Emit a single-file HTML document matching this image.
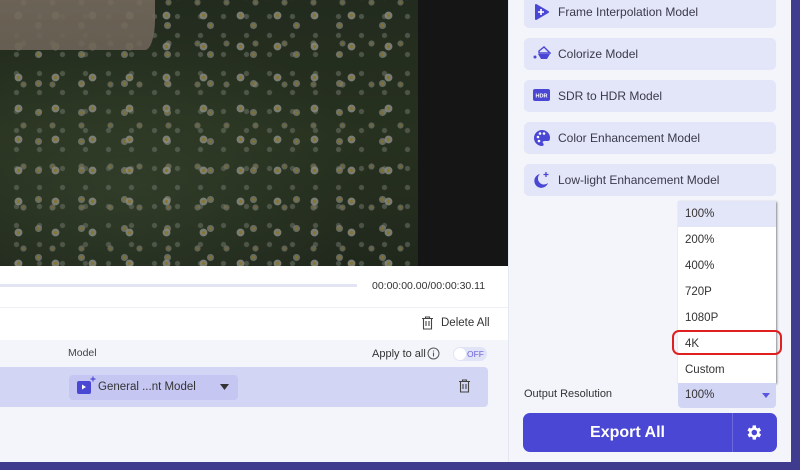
<!DOCTYPE html>
<html><head><meta charset="utf-8"><style>
*{margin:0;padding:0;box-sizing:border-box}
body{width:800px;height:470px;overflow:hidden;background:#3f3c8f;font-family:"Liberation Sans",sans-serif;position:relative;color:#333}
.abs{position:absolute}
#video{left:0;top:0;width:418px;height:266px;background-color:#222b1f;
background-image:
radial-gradient(circle,#8a7428 0 1.3px,rgba(135,138,128,.85) 1.7px 3.6px,transparent 4.2px),
radial-gradient(circle,#85702a 0 1.2px,rgba(125,128,118,.75) 1.5px 3.2px,transparent 3.8px),
radial-gradient(circle,#7a6a2a 0 1px,rgba(115,118,108,.7) 1.3px 2.8px,transparent 3.3px),
radial-gradient(circle,rgba(110,115,105,.55) 0 2.2px,transparent 3px),
radial-gradient(ellipse at 30% 70%,rgba(60,75,50,.5),transparent 60%),
linear-gradient(180deg,#222b1e,#27311f 50%,#20281c);
background-size:37px 31px,43px 29px,29px 41px,23px 19px,100% 100%,100% 100%;
background-position:0 0,17px 11px,9px 23px,5px 7px,0 0,0 0}
#beige{left:0;top:0;width:155px;height:50px;background:linear-gradient(180deg,#74695d,#6d6357);border-bottom-right-radius:10px 30px;opacity:.9}
#black{left:418px;top:0;width:90px;height:266px;background:#151515}
#left{left:0;top:266px;width:508px;height:196px;background:#fff}
#panel{left:508px;top:0;width:283px;height:462px;background:#f3f5fb;border-left:1px solid #e4e6f0}
.mbtn{position:absolute;left:524px;width:252px;height:32px;background:#e3e5f8;border-radius:5px;font-size:12px;color:#3a3a4a;line-height:32px;padding-left:34px}
.mbtn svg{position:absolute;left:9px;top:7px}
.dd{left:678px;top:201px;width:98px;height:182px;background:#fff;box-shadow:1px 1px 2px rgba(0,0,0,.45)}
.dd div{height:26px;line-height:26px;font-size:11.5px;padding-left:7px;color:#333}
</style></head><body>
<div id="video" class="abs"></div>
<div id="beige" class="abs"></div>
<div id="black" class="abs"></div>
<div id="left" class="abs">
 <div class="abs" style="left:0;top:18px;width:357px;height:3px;background:#e2e4f3"></div>
 <div class="abs" style="left:372px;top:14px;font-size:10.5px;color:#333">00:00:00.00/00:00:30.11</div>
 <div class="abs" style="left:0;top:41px;width:508px;height:1px;background:#eef0f6"></div>
 <svg class="abs" style="left:421px;top:50px" width="13" height="14" viewBox="0 0 13 14"><path d="M1 2.5h11M4.5 2.5V1h4v1.5M2.5 2.5v10.5h8V2.5M5 5v5M8 5v5" fill="none" stroke="#444" stroke-width="1.1"/></svg>
 <div class="abs" style="left:441px;top:51px;font-size:11.5px;color:#333">Delete All</div>
 <div class="abs" style="left:0;top:74px;width:508px;height:122px;background:#f3f5fb"></div>
 <div class="abs" style="left:68px;top:81px;font-size:10.5px;color:#444">Model</div>
 <div class="abs" style="left:372px;top:82px;font-size:11px;color:#333">Apply to all</div>
 <svg class="abs" style="left:427px;top:81px" width="13" height="13"><circle cx="6.5" cy="6.5" r="5.5" fill="none" stroke="#555"/><path d="M6.5 5.5v4M6.5 3.5v1" stroke="#555" stroke-width="1.1"/></svg>
 <div class="abs" style="left:453px;top:81px;width:34px;height:14px;border-radius:7px;background:#e1e3f7"><div style="position:absolute;left:1px;top:1px;width:12px;height:12px;border-radius:50%;background:#fff"></div><span style="position:absolute;left:14px;top:2px;font-size:8.5px;color:#6b62e0">OFF</span></div>
 <div class="abs" style="left:0;top:101px;width:488px;height:40px;background:#d3d5f5;border-radius:0 4px 4px 0"></div>
 <div class="abs" style="left:69px;top:109px;width:169px;height:25px;background:#c5c7f2;border-radius:4px"></div>
 <div class="abs" style="left:77px;top:115px;width:14px;height:13px;background:#4a47d5;border-radius:2px"></div>
 <svg class="abs" style="left:77px;top:110px" width="20" height="18"><path d="M5 8.5l4 2.5-4 2.5z" fill="#fff"/><path d="M16 0.5v5M13.5 3h5" stroke="#4a47d5" stroke-width="1.2"/></svg>
 <div class="abs" style="left:98px;top:115px;font-size:11.5px;color:#333">General ...nt Model</div>
 <svg class="abs" style="left:220px;top:118px" width="9" height="6"><path d="M0 0h9L4.5 6z" fill="#333"/></svg>
 <svg class="abs" style="left:458px;top:113px" width="13" height="14" viewBox="0 0 13 14"><path d="M1 2.5h11M4.5 2.5V1h4v1.5M2.5 2.5v10.5h8V2.5M5 5v5M8 5v5" fill="none" stroke="#444" stroke-width="1.1"/></svg>
</div>
<div id="panel" class="abs"></div>
<div class="mbtn" style="top:-4px"><svg width="18" height="18"><path d="M3 2l12 7-12 7z" fill="#4a47d5" stroke="#4a47d5" stroke-width="2" stroke-linejoin="round"/><path d="M8 6v6M5 9h6" stroke="#fff" stroke-width="1.6"/></svg>Frame Interpolation Model</div>
<div class="mbtn" style="top:38px"><svg width="18" height="16"><path d="M6 6l5-4 6 6H6z" fill="none" stroke="#4a47d5" stroke-width="1.4"/><path d="M5 9h12l-3 5H8z" fill="#4a47d5"/><circle cx="2" cy="12" r="1.5" fill="#4a47d5"/></svg>Colorize Model</div>
<div class="mbtn" style="top:80px"><svg width="18" height="16"><rect x="0" y="2" width="17" height="12" rx="2" fill="#4a47d5"/><text x="8.5" y="10.5" font-size="5.5" font-weight="bold" fill="#fff" text-anchor="middle" font-family="Liberation Sans">HDR</text></svg>SDR to HDR Model</div>
<div class="mbtn" style="top:122px"><svg width="18" height="17"><path d="M9 1a8 8 0 1 0 0 16c2 0 2-2 1-3s0-2 2-2h3c2 0 2-2 2-4A8 8 0 0 0 9 1z" fill="#4a47d5"/><circle cx="5" cy="8" r="1.3" fill="#fff"/><circle cx="7" cy="4.5" r="1.3" fill="#fff"/><circle cx="11" cy="4.5" r="1.3" fill="#fff"/><circle cx="6" cy="12" r="1.3" fill="#fff"/></svg>Color Enhancement Model</div>
<div class="mbtn" style="top:164px"><svg width="18" height="18"><path d="M7 3a7 7 0 1 0 8 9A6 6 0 0 1 7 3z" fill="#4a47d5"/><path d="M13 1v5M10.5 3.5h5" stroke="#4a47d5" stroke-width="1.3"/></svg>Low-light Enhancement Model</div>
<div class="abs dd"><div style="background:#e3e5f8">100%</div><div>200%</div><div>400%</div><div>720P</div><div>1080P</div><div>4K</div><div>Custom</div></div>
<div class="abs" style="left:672px;top:330px;width:110px;height:25px;border:2px solid #e02020;border-radius:7px"></div>
<div class="abs" style="left:524px;top:388px;font-size:11px;color:#333">Output Resolution</div>
<div class="abs" style="left:678px;top:383px;width:98px;height:25px;background:#d3d5f5;border-radius:0 0 4px 4px"><span style="position:absolute;left:7px;top:6px;font-size:11.5px;color:#333">100%</span><svg style="position:absolute;left:84px;top:10px" width="8" height="5"><path d="M0 0h8L4 5z" fill="#5b56e0"/></svg></div>
<div class="abs" style="left:523px;top:413px;width:254px;height:39px;background:#4a47d5;border-radius:7px"><div style="position:absolute;left:0;top:0;width:209px;height:39px;line-height:39px;text-align:center;color:#fff;font-weight:bold;font-size:16px">Export All</div><div style="position:absolute;left:209px;top:0;width:1px;height:39px;background:#6d6ae0"></div><svg style="position:absolute;left:221px;top:10px" width="19" height="19" viewBox="0 0 24 24"><path fill="#fff" d="M19.4 13a7.5 7.5 0 0 0 0-2l2.1-1.6-2-3.5-2.5 1a7.6 7.6 0 0 0-1.7-1L15 3h-4l-.4 2.9a7.6 7.6 0 0 0-1.7 1l-2.5-1-2 3.5L6.6 11a7.5 7.5 0 0 0 0 2l-2.1 1.6 2 3.5 2.5-1a7.6 7.6 0 0 0 1.7 1L11 21h4l.4-2.9a7.6 7.6 0 0 0 1.7-1l2.5 1 2-3.5zM13 15.5a3.5 3.5 0 1 1 0-7 3.5 3.5 0 0 1 0 7z"/></svg></div>
</body></html>
